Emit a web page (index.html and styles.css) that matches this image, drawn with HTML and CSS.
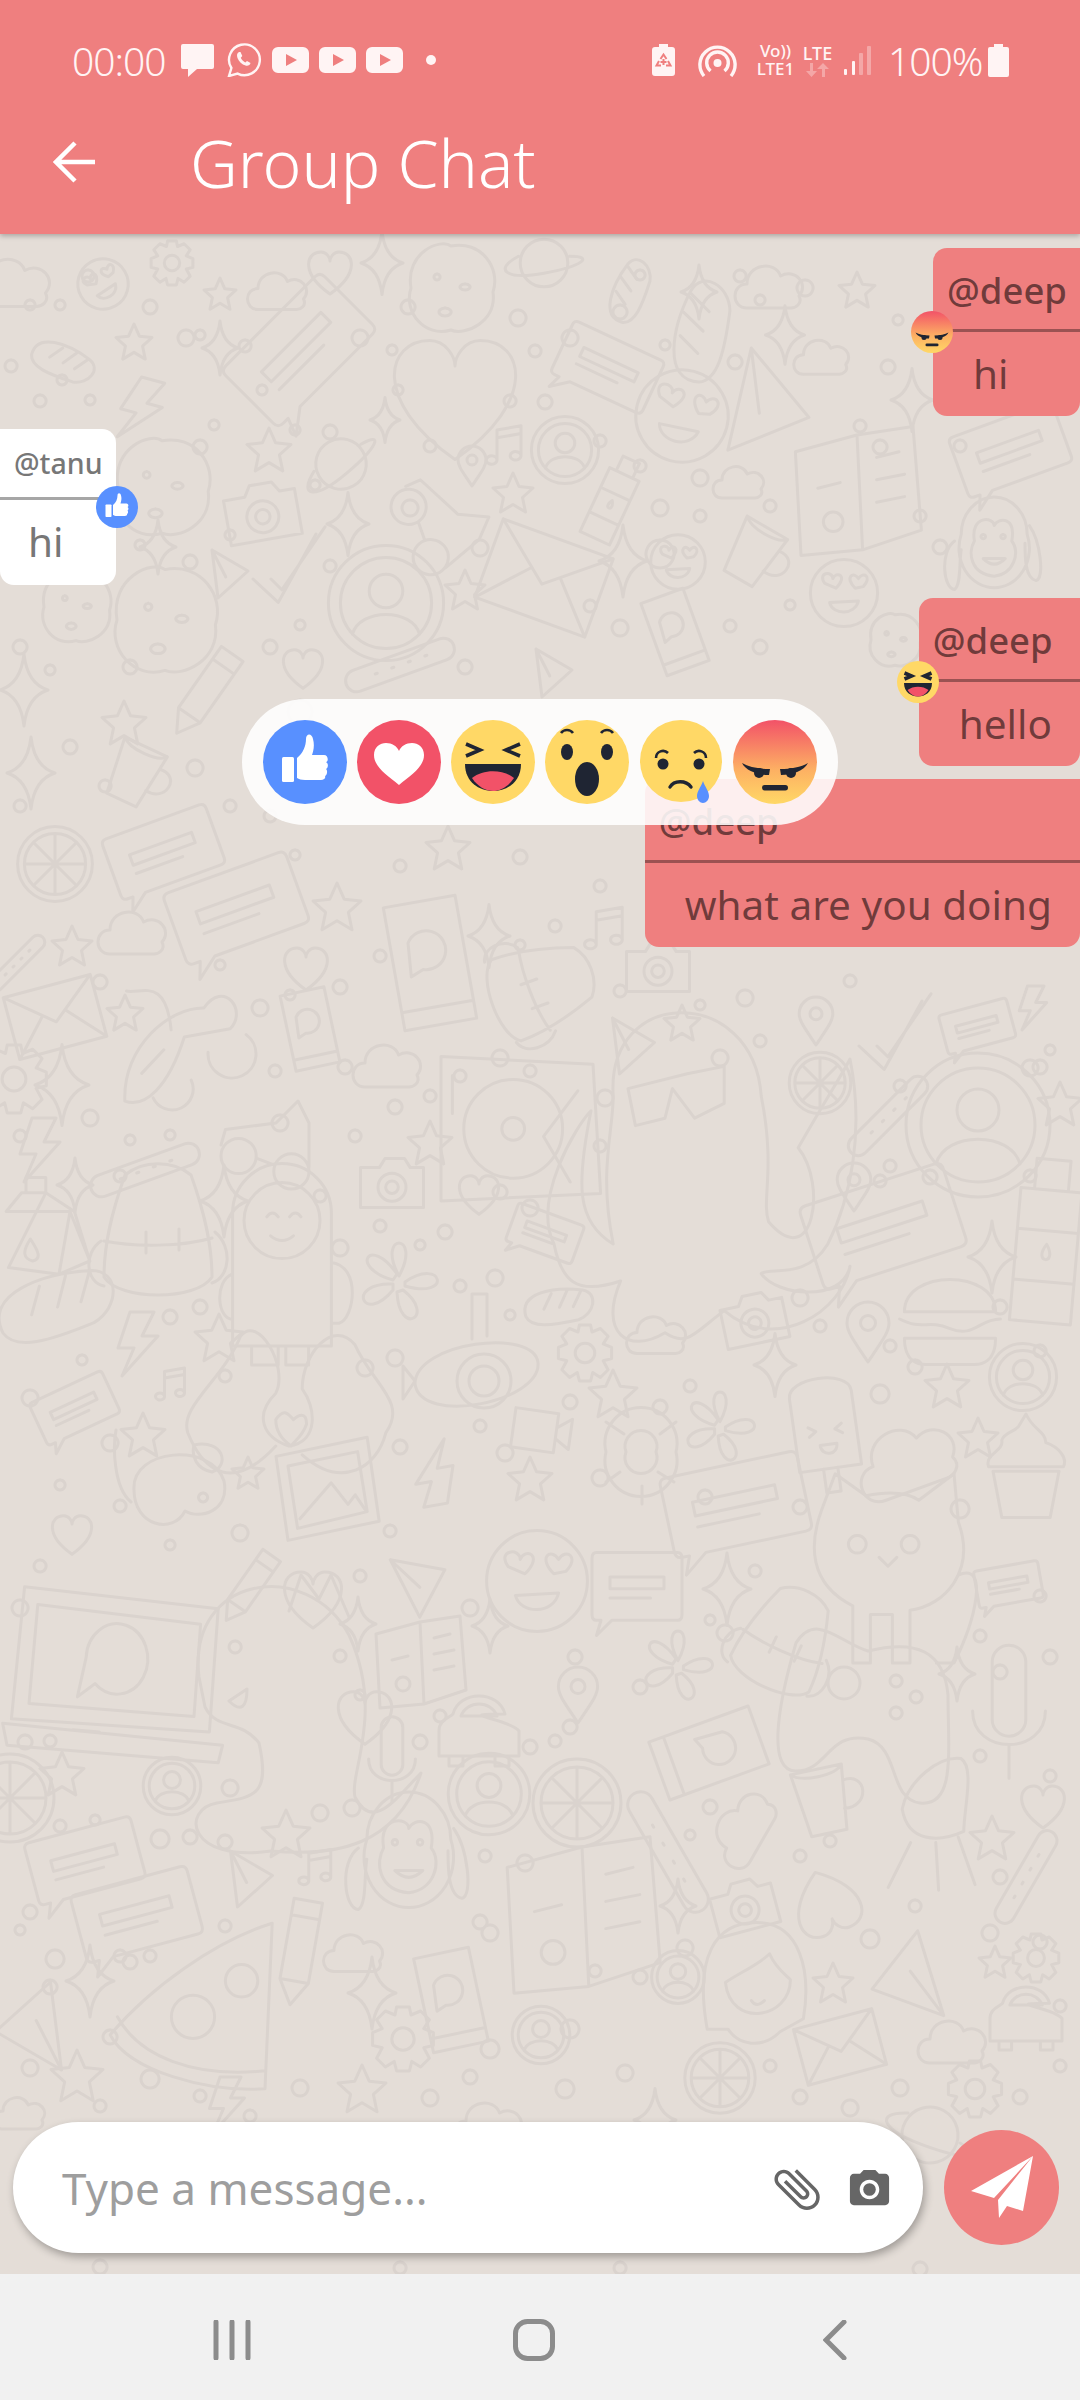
FILE: index.html
```
<!DOCTYPE html>
<html lang="en">
<head>
    <meta charset="UTF-8">
    <meta name="viewport" content="width=device-width, initial-scale=1.0">
    <title>Group Chat</title>
    <link rel="stylesheet" href="styles.css">
</head>
<body>
    <!-- shared reaction faces, 84 x 84 -->
    <svg class="sprite" aria-hidden="true">
        <defs>
            <linearGradient id="angryFill" x1="0" y1="0" x2="0" y2="1">
                <stop offset="0" stop-color="#f25268"/>
                <stop offset=".6" stop-color="#fdb163"/>
                <stop offset="1" stop-color="#ffd866"/>
            </linearGradient>
            <symbol id="r-like" viewBox="0 0 84 84">
                <circle cx="42" cy="42" r="42" fill="#5890ff"/>
                <rect x="19" y="37" width="12" height="25" rx="1.5" fill="#fff"/>
                <path fill="#fff" d="M34 38C40 33 43 26 43 19C43 13 49 13 50 19C52 26 50 32 49 35H61C65 35 66 41 63 42C66 44 65 48 63 49C65 51 64 55 62 56C63 58 61 60 58 60H42C38 60 36 59 34 58Z"/>
            </symbol>
            <symbol id="r-love" viewBox="0 0 84 84">
                <circle cx="42" cy="42" r="42" fill="#f25268"/>
                <path fill="#fff" d="M42 65C30 55 17 47 17 35C17 27 23 23 29 23C35 23 40 26 42 31C44 26 49 23 55 23C61 23 67 27 67 35C67 47 54 55 42 65Z"/>
            </symbol>
            <symbol id="r-haha" viewBox="0 0 84 84">
                <circle cx="42" cy="42" r="42" fill="#ffd866"/>
                <path fill="none" stroke="#1f2533" stroke-width="3.6" d="M15 24L29 30L15 36M69 24L55 30L69 36"/>
                <path fill="#1f2533" d="M14 44H70C70 62 56 71 42 71C28 71 14 62 14 44Z"/>
                <path fill="#f25268" d="M21 58C32 49 52 49 63 58C57 67 49 71 42 71C35 71 27 67 21 58Z"/>
            </symbol>
            <symbol id="r-wow" viewBox="0 0 84 84">
                <circle cx="42" cy="42" r="42" fill="#ffd866"/>
                <path fill="none" stroke="#1f2533" stroke-width="2.6" d="M16 13C19 9 25 9 28 13M56 13C59 9 65 9 68 13"/>
                <ellipse cx="22" cy="32" rx="6" ry="8" fill="#1f2533"/>
                <ellipse cx="62" cy="32" rx="6" ry="8" fill="#1f2533"/>
                <ellipse cx="42" cy="59" rx="12" ry="17" fill="#1f2533"/>
            </symbol>
            <symbol id="r-sad" viewBox="0 0 84 84">
                <circle cx="42" cy="41" r="41" fill="#ffd866"/>
                <path fill="none" stroke="#1f2533" stroke-width="2.6" d="M17 38C17 31 25 29 29 33M55 33C59 29 67 31 67 38"/>
                <circle cx="24" cy="44" r="5.5" fill="#1f2533"/>
                <circle cx="60" cy="44" r="5.5" fill="#1f2533"/>
                <path fill="none" stroke="#1f2533" stroke-width="3.4" stroke-linecap="round" d="M31 67C35 60 47 60 52 67"/>
                <path fill="#5890ff" d="M64 61C66 67 70 71 70 76C70 80 67 83 64 83C61 83 58 80 58 76C58 71 62 67 64 61Z"/>
            </symbol>
            <symbol id="r-angry" viewBox="0 0 84 84">
                <circle cx="42" cy="42" r="42" fill="url(#angryFill)"/>
                <path fill="#1f2533" d="M9 43C16 47 26 49 37 49L36 55C25 55 13 51 9 43ZM75 43C68 47 58 49 47 49L48 55C59 55 71 51 75 43Z"/>
                <circle cx="26" cy="53" r="5" fill="#1f2533"/>
                <circle cx="58" cy="53" r="5" fill="#1f2533"/>
                <rect x="29" y="65" width="26" height="5.500" rx="2.700" fill="#1f2533"/>
            </symbol>
        </defs>
    </svg>

    <header class="appbar">
        <div class="status">
            <span class="clock">00:00</span>
            <svg class="st-chat" width="33" height="33" viewBox="0 0 33 33"><path d="M2 0h29a2 2 0 0 1 2 2v21a2 2 0 0 1-2 2H16l-9 8v-8H2a2 2 0 0 1-2-2V2a2 2 0 0 1 2-2z"/></svg>
            <svg class="st-wa" width="35" height="34" viewBox="0 0 35 34"><path class="line" stroke-width="2.4" d="M2 33l2.400-8A15.400 15.400 0 1 1 10.600 30.600z"/><path d="M12 9c-2 1-2.500 3-1.500 6 1.300 3.600 4.500 6.500 8 7.500 2.500.6 4.500-.3 5-2.500l-3.500-2-1.700 1.500c-2-1-3.600-2.700-4.500-4.700l1.500-1.700-1.800-4z"/></svg>
            <svg class="st-yt" width="37" height="26" viewBox="0 0 37 26"><path fill-rule="evenodd" d="M6 0h25a6 6 0 0 1 6 6v14a6 6 0 0 1-6 6H6a6 6 0 0 1-6-6V6a6 6 0 0 1 6-6zM14 7v12l11-6z"/></svg>
            <svg class="st-yt" width="37" height="26" viewBox="0 0 37 26"><path fill-rule="evenodd" d="M6 0h25a6 6 0 0 1 6 6v14a6 6 0 0 1-6 6H6a6 6 0 0 1-6-6V6a6 6 0 0 1 6-6zM14 7v12l11-6z"/></svg>
            <svg class="st-yt" width="37" height="26" viewBox="0 0 37 26"><path fill-rule="evenodd" d="M6 0h25a6 6 0 0 1 6 6v14a6 6 0 0 1-6 6H6a6 6 0 0 1-6-6V6a6 6 0 0 1 6-6zM14 7v12l11-6z"/></svg>
            <span class="st-dot"></span>
            <span class="spacer"></span>
            <svg class="st-saver" width="23" height="32" viewBox="0 0 23 32"><path d="M7 0h9v3h4a3 3 0 0 1 3 3v23a3 3 0 0 1-3 3H3a3 3 0 0 1-3-3V6a3 3 0 0 1 3-3h4z"/><path fill="none" stroke="#ef7f7f" stroke-width="2" d="M8.500 15l3-4.500 3 4.500M16 17l2.500 4.500H14M7 17l-2.500 4.500H9"/><path fill="#ef7f7f" d="M10.500 15h2v2h2v2h-2v2h-2v-2h-2v-2h2z"/></svg>
            <svg class="st-hotspot" width="39" height="33" viewBox="0 0 39 33"><circle cx="19.500" cy="19" r="4"/><path class="line" stroke-width="3.400" d="M12.500 27A10.800 10.800 0 1 1 26.500 27"/><path class="line" stroke-width="3.400" d="M6 32A17.600 17.600 0 1 1 33 32"/></svg>
            <span class="st-volte">Vo))<br>LTE1</span>
            <span class="st-lte">
                <span>LTE</span>
                <svg width="23" height="14" viewBox="0 0 23 14"><path class="faint" d="M4 0h3v8h4l-5.500 6L0 8h4zM17 0l6 6h-4v8h-3V6h-5z"/></svg>
            </span>
            <svg class="st-signal" width="27" height="29" viewBox="0 0 27 29"><rect y="23" width="3" height="6" rx="1"/><rect x="8" y="15" width="3" height="14" rx="1"/><rect class="faint" x="15" y="7" width="4" height="22" rx="1"/><rect class="faint" x="23" width="4" height="29" rx="1"/></svg>
            <span class="st-level">100%</span>
            <svg class="st-battery" width="21" height="33" viewBox="0 0 21 33"><path d="M6 0h9v3h4a2 2 0 0 1 2 2v26a2 2 0 0 1-2 2H2a2 2 0 0 1-2-2V5a2 2 0 0 1 2-2h4z"/></svg>
        </div>
        <div class="toolbar">
            <svg class="back" width="42" height="42" viewBox="0 0 42 42"><path d="M42 21H3M22 2L3 21l19 19"/></svg>
            <h1>Group Chat</h1>
        </div>
    </header>

    <main class="chat">
        <svg class="wall" width="1080" height="2040" viewBox="0 234 1080 2040" aria-hidden="true">
            <defs>
                <path id="star" d="M0-40L12-13 40-10 19 9 25 38 0 23-25 38-19 9-40-10-12-13Z"/>
                <path id="spark" d="M0-45Q4-8 30 0Q4 8 0 45Q-4 8-30 0Q-4-8 0-45Z"/>
                <path id="heart" d="M0 35C-50 0-40-35-15-35C-5-35 0-25 0-20C0-25 5-35 15-35C40-35 50 0 0 35Z"/>
                <path id="cloud" d="M-30 25C-50 25-50-5-30-5C-30-30 5-35 12-15C30-25 48-5 35 10C40 20 30 25 25 25Z"/>
                <path id="tri" d="M-25-40L35-5-15 40ZM-25-40L-2 5"/>
                <path id="note" d="M-15 25V-25L25-32V18M-15-12L25-19M-15 25a9 7 0 1 1-.1-1M25 18a9 7 0 1 1-.1-1"/>
                <path id="flash" d="M-10-40H20L5-10H25L-20 40-5 5H-25Z"/>
                <path id="pin" d="M0 40C-20 10-28 0-28-12A28 28 0 0 1 28-12C28 0 20 10 0 40ZM-10-12a10 10 0 1 0 20 0a10 10 0 1 0-20 0"/>
                <path id="cam" d="M-45-22H-18L-10-35H18L26-22H45V35H-45ZM-20 6a20 20 0 1 0 40 0a20 20 0 1 0-40 0M-9 6a9 9 0 1 0 18 0a9 9 0 1 0-18 0"/>
                <path id="env" d="M-45-32H45V32H-45ZM-45-32L0 5 45-32M-45 32L-12-4M45 32L12-4"/>
                <path id="msg" d="M-50-28Q-50-33-45-33H45Q50-33 50-28V20Q50 25 45 25H-28L-45 38-40 25H-45Q-50 25-50 20ZM-30-12H30V-2H-30ZM-30 6H15"/>
                <path id="planet" d="M-28 0a28 28 0 1 0 56 0a28 28 0 1 0-56 0M-30-8C-60 8-45 20 0 12S60-8 30-8"/>
                <path id="face" d="M-42 0a42 42 0 1 0 84 0a42 42 0 1 0-84 0M-24-12C-34-26-14-28-14-18C-10-28 6-22-10 -6ZM14-6C0-20 12-28 18-18C24-28 36-20 24-8ZM-18 12C-14 28 14 28 18 10Z"/>
                <path id="gear" d="M-8-40H8L10-30 22-35 33-24 26-13 38-8V8L26 11 33 24 22 35 11 28 8 40H-8L-11 28-22 35-33 24-26 11-38 8V-8L-26-13-33-24-22-35-10-30ZM-14 0a14 14 0 1 0 28 0a14 14 0 1 0-28 0"/>
                <path id="flower" d="M0-6C-24-50 24-50 0-6ZM6 0C44-26 54 18 6 4ZM4 8C38 34 0 56-2 10ZM-6 8C-36 44-54 0-6 2ZM-6-2C-50-14-30-48-2-8Z"/>
                <path id="burger" d="M-38-6C-38-42 38-42 38-6ZM-42 0C-22 10-20 0 0 8S24 0 42 0M-38 16H38C38 36 26 38 20 38H-20C-26 38-38 36-38 16Z"/>
                <path id="cup" d="M-30-30H22L14 35H-22ZM20-14C46-18 42 18 16 14M-30-30C-20-20 14-20 22-30"/>
                <path id="car" d="M-40 30V5C-40-6-30-8-26-12-20-36 20-36 26-12-30-12 30-8 40 5V30ZM-30 30V40H-16V30M16 30V40H30V30M-18-10C-12-26 12-26 18-10Z"/>
                <path id="mic" d="M-12-35a12 12 0 0 1 24 0V6a12 12 0 0 1-24 0ZM-26 0C-26 32 26 32 26 0M0 25V48"/>
                <path id="phone" d="M-28-48H28V48H-28ZM-28 34H28M-14-18a15 15 0 1 1 8 22L-16 8Z"/>
                <path id="bag" d="M-22-38C-10-48 10-48 22-38 32-10 36 10 36 30 26 46-26 46-36 30-36 10-32-10-22-38ZM-36 6C-16 10 16 10 36 4M-8 0V14M14-2V12M-38 6C-50 14-48 34-36 36M38 0C50 10 48 30 36 34"/>
                <path id="milk" d="M-38-15L-24-32H-2V-46H-20V-32M-2-32L24-15 38 30 10 42-36 36ZM-38-15H20L10 42M20-15L38 30M-16 10C-8 22-6 28-14 30-22 28-24 22-16 10Z"/>
                <path id="bottle" d="M-10-48H10V-30H-10ZM-18-30H18V48H-18ZM-18-6H18V24H-18ZM0 2C-8 14 8 14 0 2Z"/>
                <path id="disc" d="M-48 0a48 48 0 1 0 96 0a48 48 0 1 0-96 0M-38 0a38 38 0 1 0 76 0a38 38 0 1 0-76 0M-14-10a14 14 0 1 0 28 0a14 14 0 1 0-28 0M-28 26C-22 4 22 4 28 26"/>
                <path id="pencil" d="M-12-40H12V28L0 48-12 28ZM-12-26H12M-12 28H12"/>
                <path id="capsule" d="M-42-10H42A10 10 0 0 1 42 10H-42A10 10 0 0 1-42-10ZM-24 0h2M-8 0h2M8 0h2M24 0h2"/>
                <path id="bread" d="M-40 20C-55-10-10-26 28-28 50-28 50 0 30 12-4 26-30 34-40 20ZM-12-16L-18 6M8-24L2 0M26-26L20-4"/>
                <path id="glasses" d="M-40 10a16 16 0 1 0 32 0a16 16 0 1 0-32 0M8 24a16 16 0 1 0 32 0a16 16 0 1 0-32 0M-8 12L8 18M-40 0L-36-14 10-20 30-40 40-20 40 20"/>
                <path id="ring" d="M-44 0a44 44 0 1 0 88 0a44 44 0 1 0-88 0M-36 0a36 36 0 1 0 72 0a36 36 0 1 0-72 0M-36 0H36M0-36V36M-25-25L25 25M25-25L-25 25"/>
                <path id="check" d="M-40 10L-12 36 30-40M-20 10L-8 22 40-48"/>
                <path id="cookie" d="M-40 0C-46-36-10-50 0-42 30-48 50-20 42 4 46 34 14 48 0 42-26 50-48 24-40 0ZM-14-14a3 3 0 1 0 .1 0M14-4a5 3 0 1 0 .1 0M-6 20a6 4 0 1 0 .1 0"/>
                <path id="scooter" d="M-44 20C-30-14 10-24 30-14 50-26 56 0 40 6L10-2C-14 24-34 30-44 20ZM-26 26a14 14 0 1 0 28 0M20 14a16 16 0 1 0 28 0M4-10C16-44-4-40-12-46M-26 8L-6 0"/>
                <path id="astro" d="M-26-30a26 26 0 0 1 52 0V40H-26ZM-20-26a20 20 0 1 0 40 0a20 20 0 1 0-40 0M-8-28q3-4 6 0M4-28q3-4 6 0M-6-18q6 5 12 0M26-4C42-2 38 26 30 28H26M-26 2C-36 6-34 26-26 26M-16 40V50H-2V40M2 40V50H14V40"/>
                <path id="turn" d="M-40-36L40-32 44 36-40 40ZM-28 2a26 26 0 1 0 52 0a26 26 0 1 0-52 0M-8 2a6 6 0 1 0 12 0a6 6 0 1 0-12 0M32-18L14 6 28 30M-34-26v20"/>
                <path id="octo" d="M-24-20C-26-50 14-50 16-20 20 0 16 8 18 14 30 28 34 4 26-6 34-20 38-26 40-30 44-10 40 8 34 20 28 30 18 26 16 28 20 34 38 36 40 26 38 38 20 50 6 38-2 44-4 48-10 44-20 50-28 44-22 30-34 34-38 30-40 20-46 8-34-12-30-16-34 4-34 14-24 20-28 0-24-10-24-20ZM-20-22L-4-26 6-28 6-18-2-14-8-22-10-14-18-12Z"/>
                <path id="sub" d="M-40 10C-40-18 40-28 42-4 44 22-36 38-40 10ZM-12 8a18 18 0 1 0 36 0a18 18 0 1 0-36 0M-4 8a10 10 0 1 0 20 0a10 10 0 1 0-20 0M-2-20V-50H8V-22M-40 8L-48 -2V20Z"/>
                <path id="hands" d="M-6 20C-30 46-42 24-46 14-50 2-30-10-22-30-14-40 0-16-6 -4-16 6-12 16 0 20 14 18 12 2 6-6 6-22 20-38 30-26 38-8 54 0 44 14 40 30 24 40 6 24M-6 8C-2 2 0 6 2 8 4 6 8 4 8 10 6 16 2 18 1 20-2 18-6 14-6 8Z"/>
                <path id="laptop" d="M-42-36L46-26 42 30-48 24ZM-36-28L38-19 35 23-40 17ZM-52 26L48 36 46 44-50 36ZM-20 29L-8 30M-14-4a14 16 0 1 1 4 12L-18 14Z"/>
                <path id="dino" d="M-30-10C-34-44 6-50 20-24 32 2 20 22 22 30 28 42 36 30 44 22 36 46 16 50-6 48-34 52-36 34-24 32-12 30-6 30-10 12-16 4-24 8-28 0ZM-18-22a2 2 0 1 0 .1 0M0-32L4-44 10-36 14-44 20-30M-20-2C-16 2-14 0-14-6Z"/>
                <path id="pizza" d="M-46 16C-24-10 12-36 44-46L40 46C8 48-36 36-46 16ZM-12 6a12 12 0 1 0 24 0a12 12 0 1 0-24 0M18-14a9 9 0 1 0 18 0a9 9 0 1 0-18 0M-42 6C-30 28 0 40 40 36"/>
                <path id="book" d="M-44-28L0-40 40-46 46 28 4 42-40 46ZM0-40L4 42M14-24L30-28M14-8L34-12M14 8L34 4M-28-2L-12-6M-24 22a7 7 0 1 0 14 0a7 7 0 1 0-14 0"/>
                <path id="pad" d="M-36 30C-50 30-46 0-36-34-26-50-14-34 0-30 24-36 38-30 40 -8 40 20 44 48 26 46 10 44 16 18 0 14-20 10-20 30-36 30ZM-20-14a8 8 0 1 0 16 0a8 8 0 1 0-16 0M14-18a3 3 0 1 0 .1 0M24-10a3 3 0 1 0 .1 0M14-2a3 3 0 1 0 .1 0"/>
                <path id="cat" d="M-30-30L-24-46-10-36C0-38 8-38 14-34L30-46 32-24C40-2 26 14 10 16V40H2V18H-8V40H-16V14C-36 4-36-14-30-30ZM-14-18a4 4 0 1 0 .1 0M10-18a4 4 0 1 0 .1 0M-4-8L0-4 4-8M32 0C46-6 40 20 30 40H22"/>
                <path id="monkey" d="M-28-6a32 36 0 1 0 60 0a30 34 0 1 0-60 0M-16 0C-20-24 2-22 2-14 6-22 22-22 18 0 26 10 20 30 2 32-20 30-22 10-16 0ZM-8-6a2 2 0 1 0 .1 0M10-6a2 2 0 1 0 .1 0M-8 16Q2 26 12 16ZM-34 0C-48 10-44 44-34 44-28 40-30 20-28 8M34-14C44 0 48 34 40 36 30 34 30 14 30 2"/>
                <path id="chair" d="M-22-10C-18-30 4-48 20-46 30-40 22-10 22 6 4 14-18 14-22-10ZM-16 14L-32 46M18 10L30 44M2 14L4 48"/>
                <path id="dog" d="M-30 0C-32-28 22-32 30-6 34 14 14 20 4 14 -4 30-30 24-30 0ZM10-30C30-34 34-16 22-12 12-14 8-22 10-30ZM16 2a3 3 0 1 0 .1 0M-32 8C-44-2-44-30-42-40"/>
                <path id="photo" d="M-40-28L36-44 46 26-30 42ZM-30-20L28-32 36 18-22 32ZM-20 24L6-6 20 12 26 4 34 16"/>
                <path id="video" d="M-30-22H18V22H-30ZM18-6L34-18V16L18 6"/>
                <path id="cupcake" d="M-30 2L-22 44H22L30 2ZM-34-2C-38-14-20-16-22-26-20-34-8-34-6-40L0-50C6-36 18-34 18-24 30-20 38-10 34-2Z"/>
                <path id="turtle" d="M-34 0a36 36 0 1 0 70 0a36 36 0 1 0-70 0M-14 0a16 16 0 1 0 30 0a16 16 0 1 0-30 0M-34-30L-16-18M36-30L20-18M-34 30L-20 20M34 30L18 20M2 34V52"/>
                <path id="popsicle" d="M-26-34C-26-52 26-52 26-34V28H-26ZM-6 28V48H6V28M-14-8L-8-4-14 0M14-8L8-4 14 0M-6 8H8C8 18-6 18-6 8Z"/>
                <path id="woman" d="M-36 34C-46-22-30-48 2-48 36-48 44-10 38 26L20 36C6 50-12 46-20 34ZM-22-2C-10-10 4-16 12-24 16-14 24-8 28-4 28 26 -18 34-22-2ZM-2 12Q2 18 8 12"/>
            </defs>
            <g class="doodles">
                <path d="M11 360a6 6 0 1 0 .1 0M30 300a5 5 0 1 0 .1 0M88 270a6 6 0 1 0 .1 0M60 300a5 5 0 1 0 .1 0M150 300a7 7 0 1 0 .1 0M186 330a8 8 0 1 0 .1 0M200 330a5 5 0 1 0 .1 0M245 340a6 6 0 1 0 .1 0M262 385a5 5 0 1 0 .1 0M360 330a8 8 0 1 0 .1 0M392 345a5 5 0 1 0 .1 0M408 300a7 7 0 1 0 .1 0M518 310a8 8 0 1 0 .1 0M535 345a6 6 0 1 0 .1 0M570 330a8 8 0 1 0 .1 0M640 270a5 5 0 1 0 .1 0M740 270a6 6 0 1 0 .1 0M620 305a7 7 0 1 0 .1 0M665 340a5 5 0 1 0 .1 0M735 355a7 7 0 1 0 .1 0M888 360a7 7 0 1 0 .1 0M760 295a5 5 0 1 0 .1 0M805 280a8 8 0 1 0 .1 0M898 315a5 5 0 1 0 .1 0M40 395a6 6 0 1 0 .1 0M90 395a5 5 0 1 0 .1 0M62 375a5 5 0 1 0 .1 0M200 440a7 7 0 1 0 .1 0M214 420a5 5 0 1 0 .1 0M295 425a5 5 0 1 0 .1 0M330 425a7 7 0 1 0 .1 0M398 385a5 5 0 1 0 .1 0M510 395a6 6 0 1 0 .1 0M545 395a7 7 0 1 0 .1 0M600 435a6 6 0 1 0 .1 0M700 470a8 8 0 1 0 .1 0M640 460a6 6 0 1 0 .1 0M860 420a6 6 0 1 0 .1 0M880 440a7 7 0 1 0 .1 0M960 440a6 6 0 1 0 .1 0M1050 400a7 7 0 1 0 .1 0M1065 370a5 5 0 1 0 .1 0M1000 390a6 6 0 1 0 .1 0M140 540a5 5 0 1 0 .1 0M190 555a7 7 0 1 0 .1 0M230 530a5 5 0 1 0 .1 0M315 480a5 5 0 1 0 .1 0M410 500a8 8 0 1 0 .1 0M430 440a6 6 0 1 0 .1 0M660 500a8 8 0 1 0 .1 0M700 510a6 6 0 1 0 .1 0M660 540a14 14 0 1 0 .1 0M770 500a6 6 0 1 0 .1 0M920 510a6 6 0 1 0 .1 0M940 540a7 7 0 1 0 .1 0M330 560a6 6 0 1 0 .1 0M480 540a8 8 0 1 0 .1 0M590 600a6 6 0 1 0 .1 0M620 620a8 8 0 1 0 .1 0M730 620a6 6 0 1 0 .1 0M760 640a7 7 0 1 0 .1 0M790 600a5 5 0 1 0 .1 0M270 640a7 7 0 1 0 .1 0M300 620a5 5 0 1 0 .1 0M20 640a7 7 0 1 0 .1 0M50 665a5 5 0 1 0 .1 0M130 660a7 7 0 1 0 .1 0M465 660a7 7 0 1 0 .1 0M300 700a12 12 0 1 0 .1 0M70 740a7 7 0 1 0 .1 0M105 780a6 6 0 1 0 .1 0M195 760a8 8 0 1 0 .1 0M230 800a6 6 0 1 0 .1 0M20 800a6 6 0 1 0 .1 0M270 810a6 6 0 1 0 .1 0M295 850a5 5 0 1 0 .1 0M400 860a6 6 0 1 0 .1 0M520 850a7 7 0 1 0 .1 0M600 880a6 6 0 1 0 .1 0"/>
                <path d="M100 975a7 7 0 1 0 .1 0M220 960a5 5 0 1 0 .1 0M260 1000a8 8 0 1 0 .1 0M290 990a5 5 0 1 0 .1 0M340 980a7 7 0 1 0 .1 0M380 950a6 6 0 1 0 .1 0M555 920a6 6 0 1 0 .1 0M520 940a5 5 0 1 0 .1 0M620 985a6 6 0 1 0 .1 0M700 1000a5 5 0 1 0 .1 0M745 990a8 8 0 1 0 .1 0M760 1035a6 6 0 1 0 .1 0M720 1050a8 8 0 1 0 .1 0M850 975a6 6 0 1 0 .1 0M1050 1045a5 5 0 1 0 .1 0M1030 1060a8 8 0 1 0 .1 0M20 1130a6 6 0 1 0 .1 0M90 1110a8 8 0 1 0 .1 0M120 1170a6 6 0 1 0 .1 0M130 1135a5 5 0 1 0 .1 0M170 1130a5 5 0 1 0 .1 0M280 1115a8 8 0 1 0 .1 0M275 1065a6 6 0 1 0 .1 0M355 1130a6 6 0 1 0 .1 0M395 1100a7 7 0 1 0 .1 0M430 1090a6 6 0 1 0 .1 0M345 1060a7 7 0 1 0 .1 0M460 1070a6 6 0 1 0 .1 0M500 1050a8 8 0 1 0 .1 0M530 1065a6 6 0 1 0 .1 0M605 1090a8 8 0 1 0 .1 0M600 1140a6 6 0 1 0 .1 0M900 1080a6 6 0 1 0 .1 0M1040 1060a7 7 0 1 0 .1 0M1030 1170a6 6 0 1 0 .1 0M930 1170a7 7 0 1 0 .1 0M880 1175a6 6 0 1 0 .1 0M890 1160a6 6 0 1 0 .1 0M320 1190a6 6 0 1 0 .1 0M340 1240a8 8 0 1 0 .1 0M380 1220a6 6 0 1 0 .1 0M500 1185a7 7 0 1 0 .1 0M530 1200a8 8 0 1 0 .1 0M445 1225a7 7 0 1 0 .1 0M420 1240a5 5 0 1 0 .1 0M460 1280a6 6 0 1 0 .1 0M495 1270a8 8 0 1 0 .1 0M510 1310a5 5 0 1 0 .1 0M1000 1300a7 7 0 1 0 .1 0M800 1290a8 8 0 1 0 .1 0M820 1320a6 6 0 1 0 .1 0M890 1340a6 6 0 1 0 .1 0M1040 1345a6 6 0 1 0 .1 0M30 1390a8 8 0 1 0 .1 0M82 1355a5 5 0 1 0 .1 0M170 1310a7 7 0 1 0 .1 0M200 1300a7 7 0 1 0 .1 0M225 1370a6 6 0 1 0 .1 0M365 1360a8 8 0 1 0 .1 0M395 1350a8 8 0 1 0 .1 0M570 1395a7 7 0 1 0 .1 0M660 1400a7 7 0 1 0 .1 0M690 1380a6 6 0 1 0 .1 0M880 1385a9 9 0 1 0 .1 0M915 1360a7 7 0 1 0 .1 0M60 1480a5 5 0 1 0 .1 0M110 1435a8 8 0 1 0 .1 0M120 1500a6 6 0 1 0 .1 0M400 1440a7 7 0 1 0 .1 0M480 1420a6 6 0 1 0 .1 0M505 1445a8 8 0 1 0 .1 0M600 1470a8 8 0 1 0 .1 0M705 1490a7 7 0 1 0 .1 0M800 1500a7 7 0 1 0 .1 0M960 1500a9 9 0 1 0 .1 0"/>
                <path d="M20 1600a8 8 0 1 0 .1 0M40 1560a6 6 0 1 0 .1 0M170 1540a5 5 0 1 0 .1 0M240 1525a8 8 0 1 0 .1 0M360 1570a6 6 0 1 0 .1 0M390 1525a6 6 0 1 0 .1 0M470 1600a8 8 0 1 0 .1 0M575 1650a7 7 0 1 0 .1 0M710 1615a5 5 0 1 0 .1 0M755 1565a6 6 0 1 0 .1 0M980 1630a6 6 0 1 0 .1 0M1000 1665a7 7 0 1 0 .1 0M1050 1650a7 7 0 1 0 .1 0M1040 1590a6 6 0 1 0 .1 0M25 1735a7 7 0 1 0 .1 0M50 1735a6 6 0 1 0 .1 0M230 1780a8 8 0 1 0 .1 0M340 1650a6 6 0 1 0 .1 0M360 1690a5 5 0 1 0 .1 0M420 1735a7 7 0 1 0 .1 0M440 1710a6 6 0 1 0 .1 0M530 1740a7 7 0 1 0 .1 0M555 1735a6 6 0 1 0 .1 0M570 1720a7 7 0 1 0 .1 0M640 1680a7 7 0 1 0 .1 0M725 1625a8 8 0 1 0 .1 0M980 1750a6 6 0 1 0 .1 0M1050 1770a6 6 0 1 0 .1 0M60 1820a6 6 0 1 0 .1 0M95 1815a5 5 0 1 0 .1 0M160 1830a9 9 0 1 0 .1 0M190 1830a7 7 0 1 0 .1 0M225 1835a7 7 0 1 0 .1 0M320 1805a8 8 0 1 0 .1 0M352 1800a8 8 0 1 0 .1 0M485 1850a6 6 0 1 0 .1 0M525 1855a8 8 0 1 0 .1 0M710 1800a7 7 0 1 0 .1 0M690 1830a5 5 0 1 0 .1 0M800 1850a6 6 0 1 0 .1 0M830 1835a6 6 0 1 0 .1 0M1000 1870a7 7 0 1 0 .1 0M30 1905a7 7 0 1 0 .1 0M55 1950a9 9 0 1 0 .1 0M50 1980a7 7 0 1 0 .1 0M20 1925a5 5 0 1 0 .1 0M225 1920a6 6 0 1 0 .1 0M120 1950a6 6 0 1 0 .1 0M130 1955a7 7 0 1 0 .1 0M150 1950a6 6 0 1 0 .1 0M480 1915a7 7 0 1 0 .1 0M490 1925a8 8 0 1 0 .1 0M870 1930a9 9 0 1 0 .1 0M915 1900a6 6 0 1 0 .1 0M990 1925a8 8 0 1 0 .1 0M1040 1935a7 7 0 1 0 .1 0M685 1940a8 8 0 1 0 .1 0M640 1970a7 7 0 1 0 .1 0M595 1965a6 6 0 1 0 .1 0M1060 2000a6 6 0 1 0 .1 0M570 2020a9 9 0 1 0 .1 0M490 2040a9 9 0 1 0 .1 0M110 2030a7 7 0 1 0 .1 0M150 2070a9 9 0 1 0 .1 0M100 2100a6 6 0 1 0 .1 0M30 2060a8 8 0 1 0 .1 0M200 2090a6 6 0 1 0 .1 0M300 2080a8 8 0 1 0 .1 0M430 2090a8 8 0 1 0 .1 0M470 2070a7 7 0 1 0 .1 0M565 2080a9 9 0 1 0 .1 0M625 2065a8 8 0 1 0 .1 0M770 2060a6 6 0 1 0 .1 0M800 2090a7 7 0 1 0 .1 0M900 2080a8 8 0 1 0 .1 0M1020 2090a7 7 0 1 0 .1 0M1060 2060a6 6 0 1 0 .1 0M850 2100a8 8 0 1 0 .1 0M250 2110a6 6 0 1 0 .1 0M100 2260a7 7 0 1 0 .1 0M920 2262a7 7 0 1 0 .1 0M400 2262a6 6 0 1 0 .1 0M620 2262a6 6 0 1 0 .1 0"/>

                <use href="#cloud" transform="translate(14 284) scale(.9)"/>
                <use href="#face" transform="translate(103 284) rotate(-30) scale(.6)"/>
                <use href="#gear" transform="translate(172 263) scale(.55)"/>
                <use href="#star" transform="translate(220 294) scale(.4)"/>
                <use href="#cloud" transform="translate(279 292) scale(.7)"/>
                <use href="#heart" transform="translate(330 273) scale(.6)"/>
                <use href="#spark" transform="translate(382 263) scale(.7)"/>
                <use href="#cookie" transform="translate(451 288) scale(1)"/>
                <use href="#planet" transform="translate(544 263) scale(.85)"/>
                <use href="#bread" transform="translate(630 292) rotate(-50) scale(.7)"/>
                <use href="#spark" transform="translate(699 292) scale(.6)"/>
                <use href="#cloud" transform="translate(771 288) scale(.8)"/>
                <use href="#star" transform="translate(857 290) scale(.45)"/>
                <use href="#msg" transform="translate(303 354) rotate(-45) scale(1.4)"/>
                <use href="#bread" transform="translate(62 362) rotate(40) scale(.7)"/>
                <use href="#star" transform="translate(134 342) scale(.45)"/>
                <use href="#spark" transform="translate(220 348) scale(.6)"/>
                <use href="#spark" transform="translate(385 420) scale(.5)"/>
                <use href="#heart" transform="translate(455 400) scale(1.7)"/>
                <use href="#msg" transform="translate(606 371) rotate(25) scale(1)"/>
                <use href="#face" transform="translate(682 416) rotate(15) scale(1.1)"/>
                <use href="#bread" transform="translate(702 333) rotate(-60) scale(1.1)"/>
                <use href="#spark" transform="translate(785 335) scale(.65)"/>
                <use href="#cloud" transform="translate(823 358) scale(.65)"/>
                <use href="#tri" transform="translate(764 408) rotate(20) scale(1.3)"/>
                <use href="#spark" transform="translate(912 400) scale(.7)"/>
                <use href="#flash" transform="translate(141 410) rotate(15) scale(.8)"/>
                <use href="#planet" transform="translate(341 464) rotate(-30) scale(.9)"/>
                <use href="#disc" transform="translate(565 450) scale(.7)"/>
                <use href="#note" transform="translate(506 445) scale(.6)"/>
                <use href="#bottle" transform="translate(613 499) rotate(25) scale(.9)"/>
                <use href="#pin" transform="translate(472 466) scale(.5)"/>
                <use href="#star" transform="translate(269 450) scale(.55)"/>
                <use href="#star" transform="translate(513 493) scale(.5)"/>
                <use href="#cookie" transform="translate(162 487) scale(1.1)"/>
                <use href="#cam" transform="translate(262 512) rotate(-10) scale(.8)"/>
                <use href="#glasses" transform="translate(434 520) rotate(50) scale(1.1)"/>
                <use href="#spark" transform="translate(348 524) scale(.7)"/>
                <use href="#cloud" transform="translate(740 483) scale(.6)"/>
                <use href="#book" transform="translate(857 491) scale(1.4)"/>
                <use href="#msg" transform="translate(1012 454) rotate(-20) scale(1.1)"/>
                <use href="#monkey" transform="translate(992 541) scale(1.1)"/>
                <use href="#cup" transform="translate(757 553) rotate(30) scale(.9)"/>
                <use href="#face" transform="translate(678 562) scale(.65)"/>
                <use href="#env" transform="translate(544 578) rotate(20) scale(1.3)"/>
                <use href="#spark" transform="translate(623 561) scale(.8)"/>
                <use href="#disc" transform="translate(386 603) scale(1.2)"/>
                <use href="#check" transform="translate(289 570) scale(.9)"/>
                <use href="#tri" transform="translate(227 574) scale(.6)"/>
                <use href="#spark" transform="translate(158 547) scale(.6)"/>
                <use href="#cookie" transform="translate(165 620) scale(1.2)"/>
                <use href="#cookie" transform="translate(76 607) scale(.8)"/>
                <use href="#star" transform="translate(465 590) scale(.5)"/>
                <use href="#phone" transform="translate(675 632) rotate(-20) scale(.8)"/>
                <use href="#face" transform="translate(844 593) scale(.8)"/>
                <use href="#cookie" transform="translate(895 640) scale(.6)"/>
                <use href="#heart" transform="translate(303 669) scale(.55)"/>
                <use href="#pencil" transform="translate(207 690) rotate(35) scale(1.1)"/>
                <use href="#spark" transform="translate(24 690) scale(.8)"/>
                <use href="#capsule" transform="translate(400 665) rotate(-20) scale(1.1)"/>
                <use href="#tri" transform="translate(551 673) scale(.6)"/>
                <use href="#star" transform="translate(124 723) scale(.55)"/>
                <use href="#cup" transform="translate(138 773) rotate(25) scale(.9)"/>
                <use href="#spark" transform="translate(31 773) scale(.8)"/>
                <use href="#msg" transform="translate(165 856) rotate(-20) scale(1.1)"/>
                <use href="#ring" transform="translate(55 864) scale(.85)"/>
                <use href="#star" transform="translate(448 848) scale(.55)"/>
                <use href="#note" transform="translate(606 928) scale(.65)"/>

                <use href="#msg" transform="translate(238 913) rotate(-20) scale(1.3)"/>
                <use href="#star" transform="translate(337 907) scale(.6)"/>
                <use href="#cloud" transform="translate(134 934) scale(.8)"/>
                <use href="#star" transform="translate(72 946) scale(.5)"/>
                <use href="#capsule" transform="translate(17 963) rotate(-45) scale(.7)"/>
                <use href="#heart" transform="translate(306 969) scale(.6)"/>
                <use href="#phone" transform="translate(430 963) rotate(-10) scale(1.3)"/>
                <use href="#spark" transform="translate(489 936) scale(.7)"/>
                <use href="#bag" transform="translate(540 988) rotate(70) scale(1.2)"/>
                <use href="#cam" transform="translate(658 967) scale(.7)"/>
                <use href="#env" transform="translate(55 1017) rotate(-15) scale(1)"/>
                <use href="#scooter" transform="translate(172 1046) rotate(-25) scale(1.5)"/>
                <use href="#star" transform="translate(125 1013) scale(.45)"/>
                <use href="#phone" transform="translate(310 1029) rotate(-12) scale(.8)"/>
                <use href="#cloud" transform="translate(389 1067) scale(.8)"/>
                <use href="#tri" transform="translate(630 1046) scale(.7)"/>
                <use href="#star" transform="translate(682 1023) scale(.45)"/>
                <use href="#pin" transform="translate(816 1021) scale(.6)"/>
                <use href="#check" transform="translate(895 1037) scale(.9)"/>
                <use href="#msg" transform="translate(978 1029) rotate(-15) scale(.7)"/>
                <use href="#flash" transform="translate(1033 1008) scale(.55)"/>
                <use href="#gear" transform="translate(14 1079) scale(.85)"/>
                <use href="#spark" transform="translate(62 1085) scale(.9)"/>
                <use href="#flash" transform="translate(40 1150) scale(.8)"/>
                <use href="#spark" transform="translate(75 1185) scale(.6)"/>
                <use href="#glasses" transform="translate(265 1145) scale(1.1)"/>
                <use href="#star" transform="translate(430 1143) scale(.55)"/>
                <use href="#turn" transform="translate(517 1125) scale(1.9)"/>
                <use href="#octo" transform="translate(702 1170) scale(3.7)"/>
                <use href="#ring" transform="translate(820 1083) scale(.7)"/>
                <use href="#capsule" transform="translate(888 1116) rotate(-45) scale(1)"/>
                <use href="#disc" transform="translate(978 1125) scale(1.5)"/>
                <use href="#star" transform="translate(1060 1104) scale(.55)"/>
                <use href="#capsule" transform="translate(145 1170) rotate(-20) scale(1.1)"/>
                <use href="#bag" transform="translate(158 1232) scale(1.5)"/>
                <use href="#milk" transform="translate(48 1228) scale(1.1)"/>
                <use href="#astro" transform="translate(282 1270) scale(1.9)"/>
                <use href="#spark" transform="translate(224 1201) scale(.8)"/>
                <use href="#cam" transform="translate(392 1183) scale(.7)"/>
                <use href="#heart" transform="translate(479 1195) scale(.55)"/>
                <use href="#msg" transform="translate(544 1236) rotate(20) scale(.7)"/>
                <use href="#flower" transform="translate(399 1282) scale(1)"/>
                <use href="#bread" transform="translate(558 1307) rotate(10) scale(.75)"/>
                <use href="#pin" transform="translate(854 1187) scale(.6)"/>
                <use href="#msg" transform="translate(885 1232) rotate(-18) scale(1.5)"/>
                <use href="#bottle" transform="translate(1047 1241) rotate(5) scale(1.7)"/>
                <use href="#spark" transform="translate(992 1257) scale(.8)"/>
                <use href="#burger" transform="translate(950 1319) scale(1.2)"/>
                <use href="#pin" transform="translate(868 1332) scale(.75)"/>
                <use href="#cam" transform="translate(754 1319) rotate(-12) scale(.7)"/>
                <use href="#cloud" transform="translate(658 1336) scale(.7)"/>
                <use href="#bread" transform="translate(55 1307) scale(1.3)"/>
                <use href="#flash" transform="translate(138 1344) scale(.8)"/>
                <use href="#star" transform="translate(219 1338) scale(.6)"/>
                <use href="#sub" transform="translate(475 1369) scale(1.5)"/>
                <use href="#gear" transform="translate(585 1353) scale(.7)"/>
                <use href="#spark" transform="translate(775 1365) scale(.7)"/>
                <use href="#disc" transform="translate(1023 1377) scale(.7)"/>
                <use href="#star" transform="translate(947 1386) scale(.55)"/>
                <use href="#hands" transform="translate(289 1402) scale(2.2)"/>
                <use href="#star" transform="translate(613 1394) scale(.6)"/>
                <use href="#flower" transform="translate(720 1427) scale(.9)"/>
                <use href="#msg" transform="translate(76 1411) rotate(-25) scale(.8)"/>
                <use href="#note" transform="translate(172 1384) scale(.5)"/>
                <use href="#turtle" transform="translate(640 1452) scale(1)"/>
                <use href="#popsicle" transform="translate(826 1435) rotate(-8) scale(1.2)"/>
                <use href="#cloud" transform="translate(909 1460) rotate(-20) scale(1.2)"/>
                <use href="#star" transform="translate(978 1438) scale(.5)"/>
                <use href="#cupcake" transform="translate(1026 1469) scale(1.1)"/>
                <use href="#video" transform="translate(540 1431) rotate(8) scale(.9)"/>
                <use href="#star" transform="translate(143 1435) scale(.55)"/>
                <use href="#dog" transform="translate(179 1490) scale(1.5)"/>
                <use href="#photo" transform="translate(324 1490) scale(1.2)"/>
                <use href="#star" transform="translate(248 1473) scale(.4)"/>
                <use href="#flash" transform="translate(434 1473) rotate(170) scale(.8)"/>
                <use href="#star" transform="translate(530 1479) scale(.55)"/>
                <use href="#msg" transform="translate(737 1510) rotate(-12) scale(1.4)"/>
                <use href="#heart" transform="translate(72 1535) scale(.55)"/>

                <use href="#laptop" transform="translate(117 1666) scale(2.2)"/>
                <use href="#pencil" transform="translate(251 1585) rotate(35) scale(.9)"/>
                <use href="#heart" transform="translate(313 1600) scale(.8)"/>
                <use href="#tri" transform="translate(420 1583) rotate(-20) scale(.8)"/>
                <use href="#face" transform="translate(537 1581) scale(1.2)"/>
                <use href="#msg" transform="translate(637 1591) scale(.9) scale(1 1.3)"/>
                <use href="#spark" transform="translate(727 1589) scale(.8)"/>
                <use href="#cat" transform="translate(888 1575) scale(2.2)"/>
                <use href="#msg" transform="translate(1009 1587) rotate(-10) scale(.65)"/>
                <use href="#spark" transform="translate(358 1624) scale(.6)"/>
                <use href="#spark" transform="translate(490 1626) scale(.6)"/>
                <use href="#dino" transform="translate(289 1707) scale(3)"/>
                <use href="#book" transform="translate(420 1662) scale(1)"/>
                <use href="#pin" transform="translate(578 1695) scale(.7)"/>
                <use href="#flower" transform="translate(678 1666) scale(.9)"/>
                <use href="#bag" transform="translate(785 1641) rotate(25) scale(1.2)"/>
                <use href="#pad" transform="translate(868 1711) scale(2)"/>
                <use href="#spark" transform="translate(957 1674) scale(.6)"/>
                <use href="#mic" transform="translate(1009 1711) scale(1.4)"/>
                <use href="#heart" transform="translate(365 1718) scale(.75)"/>
                <use href="#car" transform="translate(479 1726) scale(1)"/>
                <use href="#phone" transform="translate(709 1753) rotate(70) scale(1.1)"/>
                <use href="#mic" transform="translate(392 1759) scale(.9)"/>
                <use href="#star" transform="translate(62 1774) scale(.55)"/>
                <use href="#disc" transform="translate(172 1786) scale(.6)"/>
                <use href="#ring" transform="translate(10 1798) scale(1)"/>
                <use href="#disc" transform="translate(489 1794) scale(.85)"/>
                <use href="#ring" transform="translate(577 1803) scale(1)"/>
                <use href="#cloud" transform="translate(744 1827) rotate(-60) scale(.9)"/>
                <use href="#cup" transform="translate(826 1798) rotate(-12) scale(1)"/>
                <use href="#chair" transform="translate(933 1823) scale(1.4)"/>
                <use href="#heart" transform="translate(1043 1807) scale(.6)"/>
                <use href="#monkey" transform="translate(406 1848) scale(1.4)"/>
                <use href="#star" transform="translate(286 1834) scale(.6)"/>
                <use href="#msg" transform="translate(86 1865) rotate(-15) scale(1.1)"/>
                <use href="#note" transform="translate(317 1867) scale(.55)"/>
                <use href="#tri" transform="translate(248 1879) scale(.7)"/>
                <use href="#capsule" transform="translate(668 1852) rotate(60) scale(1.3)"/>
                <use href="#book" transform="translate(582 1915) scale(1.7)"/>
                <use href="#msg" transform="translate(138 1919) rotate(-15) scale(1.2)"/>
                <use href="#pencil" transform="translate(300 1948) rotate(10) scale(1.2)"/>
                <use href="#spark" transform="translate(678 1906) scale(.6)"/>
                <use href="#cam" transform="translate(744 1906) rotate(-15) scale(.7)"/>
                <use href="#heart" transform="translate(826 1902) rotate(160) scale(.9)"/>
                <use href="#capsule" transform="translate(1026 1877) rotate(-60) scale(1)"/>
                <use href="#cloud" transform="translate(355 1954) scale(.7)"/>
                <use href="#star" transform="translate(992 1838) scale(.55)"/>
                <use href="#pizza" transform="translate(193 2006) scale(1.8)"/>
                <use href="#phone" transform="translate(451 2000) rotate(-12) scale(1)"/>
                <use href="#disc" transform="translate(678 1977) scale(.55)"/>
                <use href="#woman" transform="translate(754 1985) scale(1.3)"/>
                <use href="#star" transform="translate(833 1983) scale(.5)"/>
                <use href="#tri" transform="translate(909 1977) rotate(170) scale(1.1)"/>
                <use href="#star" transform="translate(995 1962) scale(.4)"/>
                <use href="#gear" transform="translate(1036 1958) scale(.6)"/>
                <use href="#car" transform="translate(1026 2014) scale(.9)"/>
                <use href="#spark" transform="translate(90 1981) scale(.8)"/>
                <use href="#spark" transform="translate(372 1993) scale(.8)"/>
                <use href="#tri" transform="translate(34 2026) rotate(180) scale(1.1)"/>
                <use href="#gear" transform="translate(403 2039) scale(.8)"/>
                <use href="#disc" transform="translate(541 2035) scale(.6)"/>
                <use href="#env" transform="translate(840 2047) rotate(-15) scale(.9)"/>
                <use href="#cloud" transform="translate(954 2043) scale(.8)"/>
                <use href="#ring" transform="translate(720 2078) scale(.8)"/>
                <use href="#gear" transform="translate(975 2089) scale(.7)"/>
                <use href="#star" transform="translate(77 2076) scale(.65)"/>
                <use href="#star" transform="translate(362 2089) scale(.6)"/>
                <use href="#flash" transform="translate(227 2105) scale(.7)"/>
                <use href="#cloud" transform="translate(21 2114) scale(.6)"/>
                <use href="#cloud" transform="translate(490 2125) scale(.8)"/>
                <use href="#spark" transform="translate(655 2120) scale(.7)"/>
                <use href="#planet" transform="translate(930 2135) rotate(30) scale(1)"/>
            </g>
        </svg>

        <div class="messages">
            <div class="bubble mine">
                <div class="sender">@deep</div>
                <div class="text">hi</div>
                <svg class="badge"><use href="#r-angry"/></svg>
            </div>
            <div class="bubble theirs">
                <div class="sender">@tanu</div>
                <div class="text">hi</div>
                <svg class="badge"><use href="#r-like"/></svg>
            </div>
            <div class="bubble mine">
                <div class="sender">@deep</div>
                <div class="text">hello</div>
                <svg class="badge"><use href="#r-haha"/></svg>
            </div>
            <div class="bubble mine">
                <div class="sender">@deep</div>
                <div class="text">what are you doing</div>
            </div>
        </div>

        <div class="reactions">
            <svg class="face"><use href="#r-like"/></svg>
            <svg class="face"><use href="#r-love"/></svg>
            <svg class="face"><use href="#r-haha"/></svg>
            <svg class="face"><use href="#r-wow"/></svg>
            <svg class="face"><use href="#r-sad"/></svg>
            <svg class="face"><use href="#r-angry"/></svg>
        </div>

        <div class="composer">
            <div class="input">
                <span class="placeholder">Type a message...</span>
                <svg class="clip" width="56" height="56" viewBox="0 0 24 24"><path transform="rotate(-45 12 12)" d="M16.500 6v11.500c0 2.210-1.790 4-4 4s-4-1.790-4-4V5c0-1.380 1.120-2.500 2.500-2.500s2.500 1.120 2.500 2.500v10.500c0 .55-.45 1-1 1s-1-.45-1-1V6H10v9.500c0 1.380 1.120 2.500 2.500 2.500s2.500-1.120 2.500-2.500V5c0-2.210-1.790-4-4-4S7 2.790 7 5v12.500c0 3.040 2.460 5.500 5.500 5.500s5.500-2.460 5.500-5.500V6h-1.500z"/></svg>
                <svg class="camera" width="47" height="47" viewBox="0 0 24 24"><circle cx="12" cy="12" r="3.200"/><path d="M9 2L7.170 4H4c-1.100 0-2 .9-2 2v12c0 1.100.9 2 2 2h16c1.100 0 2-.9 2-2V6c0-1.100-.9-2-2-2h-3.170L15 2H9zm3 15c-2.760 0-5-2.240-5-5s2.240-5 5-5 5 2.240 5 5-2.240 5-5 5z"/></svg>
            </div>
            <button class="send">
                <svg width="115" height="115" viewBox="0 0 115 115"><path d="M89 26L27 61 50 68zM89 26L54 70 55 88 63 76 79 81z"/></svg>
            </button>
        </div>
    </main>

    <nav class="navbar">
        <svg width="38" height="40" viewBox="0 0 38 40"><path d="M3 2V38M19 2V38M35 2V38"/></svg>
        <svg class="nav-home" width="42" height="42" viewBox="0 0 42 42"><rect x="2.500" y="2.500" width="37" height="37" rx="12"/></svg>
        <svg class="nav-back" width="24" height="40" viewBox="0 0 24 40"><path d="M21 2L3 20l18 18"/></svg>
    </nav>
</body>
</html>
```
FILE: styles.css
```
* {
    box-sizing: border-box;
}
html, body {
    margin: 0;
    padding: 0;
}
body {
    width: 1080px;
    height: 2400px;
    display: flex;
    flex-direction: column;
    overflow: hidden;
    font-family: "Noto Sans", "Open Sans", sans-serif;
    background-color: #e4ddd7;
}
.sprite {
    position: absolute;
    width: 0;
    height: 0;
}

/* top bar */
.appbar {
    height: 234px;
    flex: none;
    position: relative;
    z-index: 3;
    background-color: #ef7f7f;
    box-shadow: 0 2px 5px rgba(0, 0, 0, 0.25);
    color: #fff;
}
.status {
    height: 120px;
    padding: 0 71px 0 72px;
    display: flex;
    align-items: center;
    color: #fff4f4;
    fill: #fff4f4;
}
.status .line {
    fill: none;
    stroke: #fff4f4;
}
.status .faint {
    opacity: 0.35;
}
.clock {
    font-size: 39px;
    font-weight: 300;
    width: 93px;
    letter-spacing: -1px;
}
.st-chat {
    margin-left: 16px;
}
.st-wa {
    margin-left: 13px;
}
.st-yt {
    margin-left: 10px;
}
.st-dot {
    width: 10px;
    height: 10px;
    margin-left: 23px;
    border-radius: 50%;
    background-color: #fff4f4;
}
.spacer {
    flex: 1;
}
.st-hotspot {
    margin-left: 23px;
}
.st-volte {
    margin-left: 19px;
    width: 39px;
    text-align: center;
    font-size: 17px;
    font-weight: 500;
    line-height: 18px;
    white-space: nowrap;
}
.st-lte {
    margin-left: 7px;
    width: 31px;
    display: flex;
    flex-direction: column;
    align-items: center;
    font-size: 18px;
    font-weight: 500;
    line-height: 19px;
}
.st-signal {
    margin-left: 11px;
}
.st-level {
    margin-left: 17px;
    width: 93px;
    font-size: 39px;
    font-weight: 300;
    letter-spacing: -1px;
    white-space: nowrap;
}
.st-battery {
    margin-left: 7px;
}
.toolbar {
    height: 114px;
    padding: 0 0 30px 53px;
    display: flex;
    align-items: center;
}
.back {
    fill: none;
    stroke: #fff;
    stroke-width: 4.5px;
}
h1 {
    margin: 0 0 0 95px;
    font-size: 66px;
    font-weight: 300;
    line-height: 1;
}

/* chat area */
.chat {
    flex: 1;
    position: relative;
    display: flex;
    flex-direction: column;
    min-height: 0;
}
.wall {
    position: absolute;
    left: 0;
    top: 0;
}
.doodles {
    fill: none;
    stroke: #dad3ce;
    stroke-width: 3px;
    stroke-linejoin: round;
    stroke-linecap: round;
}
.doodles path {
    vector-effect: non-scaling-stroke;
}
defs path {
    vector-effect: non-scaling-stroke;
}
.messages {
    position: relative;
    display: flex;
    flex-direction: column;
    gap: 13px;
    padding-top: 14px;
}
.bubble {
    position: relative;
    display: flex;
    flex-direction: column;
}
.mine {
    align-self: flex-end;
    height: 168px;
    background-color: #ef7f7f;
    color: rgba(0, 0, 0, 0.54);
    border-radius: 14px 0 14px 14px;
}
.theirs {
    align-self: flex-start;
    height: 156px;
    background-color: #fff;
    color: #777;
    border-radius: 0 14px 14px 14px;
}
.sender {
    height: 84px;
    padding: 17px 13px 0 14px;
    border-bottom: 3px solid rgba(0, 0, 0, 0.35);
    font-size: 36.5px;
    font-weight: 500;
    line-height: 50px;
}
.theirs .sender {
    height: 71px;
    padding: 9px 13px 0 14px;
    font-size: 28.5px;
    line-height: 50px;
}
.text {
    padding: 14px 28px 0 40px;
    font-size: 40.5px;
    line-height: 56px;
    white-space: nowrap;
}
.theirs .text {
    padding: 14px 50px 0 28px;
}
.badge {
    position: absolute;
    top: 63px;
    left: -22px;
    width: 42px;
    height: 42px;
}
.theirs .badge {
    top: 57px;
    left: auto;
    right: -22px;
}

/* reaction picker, lies over the messages */
.reactions {
    position: absolute;
    left: 242px;
    top: 465px;
    width: 596px;
    height: 126px;
    padding: 21px;
    display: flex;
    justify-content: space-between;
    border-radius: 63px;
    background-color: rgba(255, 255, 255, 0.88);
}
.face {
    width: 84px;
    height: 84px;
}

/* message box */
.composer {
    position: relative;
    margin-top: auto;
    padding: 0 21px 21px 13px;
    display: flex;
    align-items: center;
}
.input {
    width: 910px;
    height: 131px;
    padding: 0 30px 0 49px;
    display: flex;
    align-items: center;
    border-radius: 66px;
    background-color: #fff;
    box-shadow: 2px 4px 8px rgba(0, 0, 0, 0.3);
}
.placeholder {
    flex: 1;
    font-size: 44px;
    color: #9e9e9e;
}
.clip {
    margin-top: 2px;
    fill: #666;
}
.camera {
    margin-top: 3px;
    margin-left: 21px;
    fill: #666;
}
.send {
    width: 115px;
    height: 115px;
    margin-left: 21px;
    padding: 0;
    border: none;
    border-radius: 50%;
    background-color: #ef7f7f;
}
.send svg {
    display: block;
    fill: #fff;
}

/* android nav */
.navbar {
    height: 126px;
    flex: none;
    position: relative;
    padding: 5px 0 0 213px;
    display: flex;
    align-items: center;
    background-color: #f1f1f1;
}
.navbar svg {
    fill: none;
    stroke: #8c8c8c;
    stroke-width: 5px;
    stroke-linecap: round;
}
.nav-home {
    margin-left: 262px;
}
.nav-back {
    margin-left: 268px;
}
```
